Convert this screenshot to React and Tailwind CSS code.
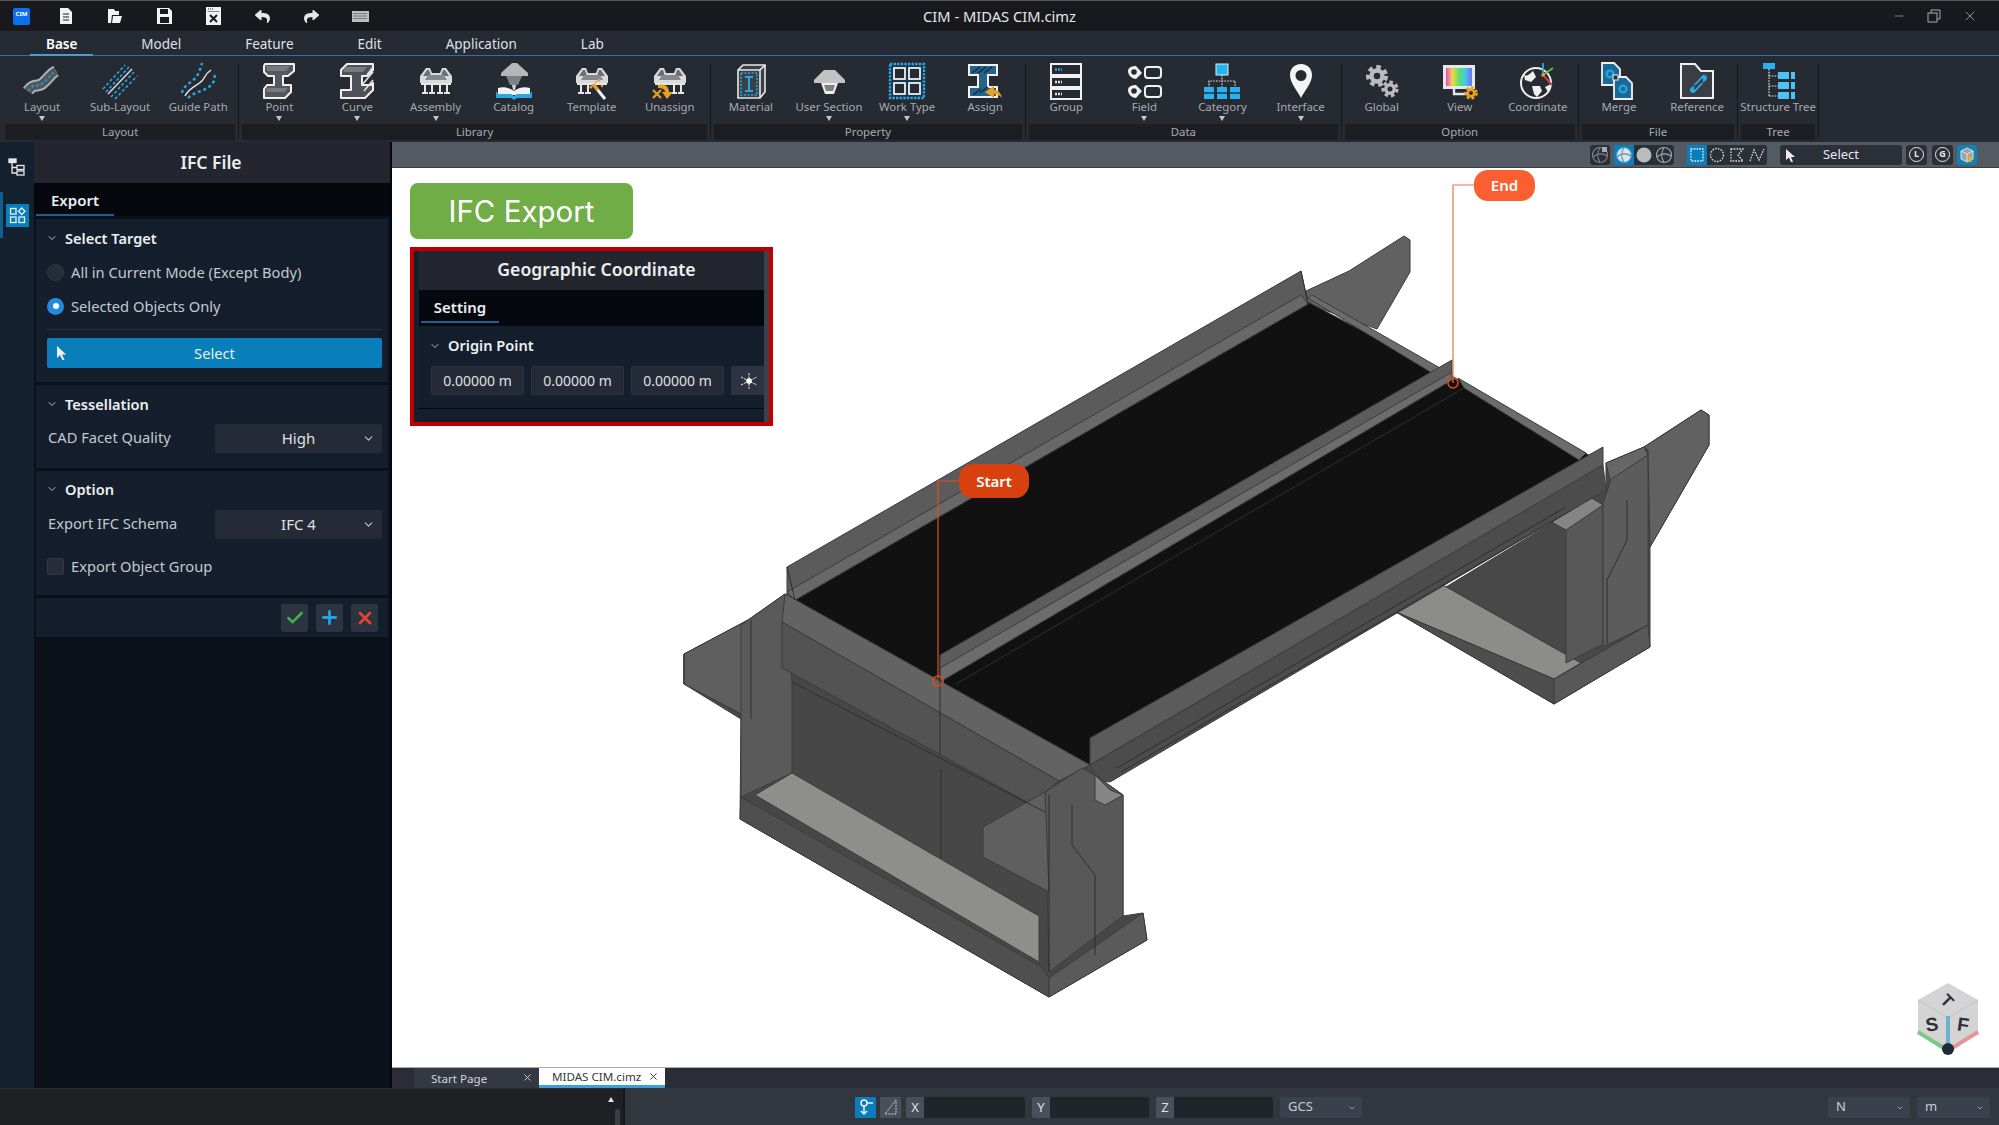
// CIM - MIDAS window, IFC Export screen
import React from 'react';
import { ChevronDown, Minus, X, Check, Plus } from 'lucide-react';
import { FaReply, FaShare } from 'react-icons/fa';

const BLUE = '#2aa7e0';

const Svg = ({ children, size = 40, box = 40 }) => (
  <svg width={size} height={size} viewBox={`0 0 ${box} ${box}`} fill="none">{children}</svg>
);

const Gear = ({ x, y, r, fill = '#b9bbbd', hole = '#262a33' }) => (
  <g>
    <circle cx={x} cy={y} r={r} fill="none" stroke={fill} strokeWidth={r * 0.45} strokeDasharray={`${r * 0.5} ${r * 0.42}`} />
    <circle cx={x} cy={y} r={r * 0.85} fill={fill} />
    <circle cx={x} cy={y} r={r * 0.36} fill={hole} />
  </g>
);

const Tray = () => (
  <g>
    <path d="M4 15 L10 7 H14 L16 12 H24 L26 7 H30 L36 15 V22 H4 Z" fill="#d9dadb" />
    <path d="M7 15 L11 9 H13 L15 15 Z M33 15 L29 9 H27 L25 15 Z" fill="#6b6e73" />
    <path d="M12 14 H28 L31 19 H9 Z" fill="#85888d" />
  </g>
);

const Piers = ({ xs = [9, 16, 24, 31] }) => (
  <g stroke="#e6e6e6" strokeWidth="2">
    {xs.map((x) => <path key={x} d={`M${x} 22 V32 M${x - 3} 32 H${x + 3}`} />)}
    <path d="M5 23 H35" />
  </g>
);

const icons = {
  layout: (
    <Svg>
      <path d="M6 30 C12 21 16 27 21 22 C27 17 28 13 34 10" stroke="#b0b1b2" strokeWidth="12" />
      <path d="M6 30 C12 21 16 27 21 22 C27 17 28 13 34 10" stroke="#50565e" strokeWidth="8" />
      <path d="M6 30 C12 21 16 27 21 22 C27 17 28 13 34 10" stroke="#2f8fbd" strokeWidth="2" strokeDasharray="3 2" />
    </Svg>
  ),
  subLayout: (
    <Svg>
      <path d="M8 33 L32 8" stroke="#d5d5d5" strokeWidth="1.5" />
      <g stroke={BLUE} strokeWidth="1.6" strokeDasharray="3 2.2">
        <path d="M3 28 L25 4" /><path d="M6 31 L29 6" /><path d="M11 36 L34 11" /><path d="M15 38 L37 15" />
      </g>
    </Svg>
  ),
  guidePath: (
    <Svg>
      <path d="M7 35 C13 24 22 25 26 17 C28 13 30 11 33 9" stroke="#e4e4e4" strokeWidth="1.5" />
      <path d="M4 32 C5 24 14 22 19 15 C21 11 23 7 24 2" stroke={BLUE} strokeWidth="2.4" strokeDasharray="3 2.8" />
      <path d="M10 37 C18 29 30 31 36 20 C37 17 37 15 36 13" stroke={BLUE} strokeWidth="2.4" strokeDasharray="3 2.8" />
    </Svg>
  ),
  point: (
    <Svg>
      <path d="M6 3 H35 V10 L29 15 H24 V24 H32 V31 L26 37 H5 V28 L8 24 H15 V15 H9 L5 11 V5 Z" fill="#55585e" stroke="#f1f1f1" strokeWidth="2" strokeLinejoin="round" />
      <path d="M7 5 H31 L27 10 H8 Z M8 27 H29 L25 31 H7 Z" fill="#777a7f" />
    </Svg>
  ),
  curve: (
    <Svg>
      <path d="M4 9 L10 3 H36 V9 L30 15 H25 V24 H34 L36 22 V29 L28 37 H4 V29 H14 V15 H4 Z" fill="#4e5157" stroke="#f1f1f1" strokeWidth="2" strokeLinejoin="round" />
      <path d="M25 24 L36 11 M27 30 L36 19 M30 14 L36 6" stroke="#e4e4e4" strokeWidth="1.6" />
      <path d="M8 6 H30 L26 11 H6 Z" fill="#777a7f" />
    </Svg>
  ),
  assembly: <Svg><Tray /><Piers /></Svg>,
  catalog: (
    <Svg>
      <path d="M18 2 H23 L34 12 V15 H7 V12 Z" fill="#b5b6b8" />
      <path d="M12 15 H28 L24 24 H16 Z" fill="#7d8085" />
      <path d="M18 24 H22 L21 29 H19 Z" fill="#d4d5d6" />
      <path d="M4 27 C10 25 16 27 20 30 C24 27 30 25 36 27 V34 H4 Z" fill="#eef2f5" />
      <path d="M2 30 V37 H17 L20 39 L23 37 H38 V30 L36 33 H23 L20 35 L17 33 H4 Z" fill={BLUE} />
    </Svg>
  ),
  template: (
    <Svg>
      <Tray /><Piers xs={[9, 16]} />
      <path d="M21 23 L33 38" stroke="#eee" strokeWidth="3" />
      <path d="M21 23 L26 29" stroke="#e8a021" strokeWidth="3" />
      <g fill="#e8a021"><circle cx="27" cy="19" r="1.6" /><circle cx="19" cy="26" r="1.6" /><circle cx="30" cy="25" r="1.2" /><circle cx="24" cy="21" r="1" /></g>
    </Svg>
  ),
  unassign: (
    <Svg>
      <Tray /><Piers xs={[24, 31]} />
      <path d="M3 29 L11 37 M11 29 L3 37" stroke="#e8a021" strokeWidth="2.2" />
      <path d="M8 24 C14 22 19 25 19 31 H23 L17 38 L12 31 H15 C15 28 12 27 8 27 Z" fill="#e8a021" />
    </Svg>
  ),
  material: (
    <Svg>
      <path d="M7 9 L12 4 H34 V31 L29 37 H7 Z" fill="#3b3f46" stroke="#e8e8e8" strokeWidth="1.6" />
      <path d="M7 9 H29 V37 M29 9 L34 4" stroke="#e8e8e8" strokeWidth="1.6" />
      <rect x="10" y="12" width="16" height="22" stroke={BLUE} strokeWidth="1.6" strokeDasharray="2 1.5" />
      <path d="M14 16 H22 M18 16 V30 M14 30 H22" stroke={BLUE} strokeWidth="2" />
    </Svg>
  ),
  userSection: (
    <Svg>
      <path d="M15 9 H26 L36 19 V22 H5 V19 Z" fill="#c2c3c5" />
      <path d="M12 22 H29 L25 33 H16 Z" fill="#eeeeee" />
      <path d="M15 24 H26 L24 30 H17 Z" fill="#7e8186" />
    </Svg>
  ),
  workType: (
    <Svg>
      <rect x="3" y="3" width="34" height="34" fill="#12384f" stroke={BLUE} strokeWidth="2.4" strokeDasharray="2.4 1.2" />
      <g stroke="#f0f0f0" strokeWidth="1.8" fill="#262a33">
        <rect x="7" y="7" width="11" height="11" /><rect x="22" y="7" width="11" height="11" />
        <rect x="7" y="22" width="11" height="11" /><rect x="22" y="22" width="11" height="11" />
      </g>
    </Svg>
  ),
  assign: (
    <Svg>
      <path d="M4 4 H32 V14 H23 V26 H32 V36 H4 V26 H13 V14 H4 Z" fill="#26628a" stroke="#f1f1f1" strokeWidth="2" />
      <path d="M7 12 L15 6 M13 12 L21 6 M19 12 L27 6 M15 32 L23 26 M8 34 L16 28" stroke="#0f2c3f" strokeWidth="1.4" />
      <path d="M20 31 L29 25 V29 C34 29 36 33 37 37 C34 34 32 33 29 33 V37 Z" fill="#e8a021" />
    </Svg>
  ),
  group: (
    <Svg>
      <g stroke="#f1f1f1" strokeWidth="2">
        <rect x="5" y="3" width="30" height="11" /><rect x="5" y="16" width="30" height="10" /><rect x="5" y="28" width="30" height="10" />
      </g>
      <path d="M9 8.5 H16" stroke={BLUE} strokeWidth="2.4" strokeDasharray="2 1" />
      <path d="M9 21 H16 M9 33 H16" stroke="#e4e4e4" strokeWidth="2.4" strokeDasharray="2 1" />
    </Svg>
  ),
  field: (
    <Svg>
      <path d="M4 10 C4 6 9 5 12 5 L18 12 L12 18 C9 18 4 15 4 10 Z M4 29 C4 25 9 24 12 24 L18 30 L12 37 C9 37 4 34 4 29 Z" fill="#f1f1f1" />
      <circle cx="10" cy="11" r="2.8" fill="#262a33" /><circle cx="10" cy="30" r="2.8" fill="#262a33" />
      <rect x="21" y="6" width="16" height="11" rx="3" stroke="#f1f1f1" strokeWidth="2" />
      <rect x="21" y="25" width="16" height="11" rx="3" stroke="#f1f1f1" strokeWidth="2" />
    </Svg>
  ),
  category: (
    <Svg>
      <rect x="14" y="3" width="12" height="11" fill="#29b2f0" stroke="#d8eef9" />
      <path d="M20 14 V27 M7 27 V20 H33 V27" stroke="#e4e4e4" strokeWidth="1.2" strokeDasharray="1.6 1.2" />
      {[2, 15, 28].map((x) => (
        <g key={x}><rect x={x} y="26" width="10" height="12" fill="#29b2f0" /><rect x={x} y="31" width="10" height="2" fill="#15547a" /></g>
      ))}
    </Svg>
  ),
  interfaceIcon: (
    <Svg>
      <path fillRule="evenodd" d="M20 3 C27 3 31 8 31 14 C31 22 24 29 20 37 C16 29 9 22 9 14 C9 8 13 3 20 3 Z M20 9 A5.5 5.5 0 1 0 20 20 A5.5 5.5 0 1 0 20 9 Z" fill="#f4f4f4" />
    </Svg>
  ),
  globalIcon: (
    <Svg><Gear x={15} y={15} r={9} /><Gear x={28} y={28} r={7} /></Svg>
  ),
  view: (
    <Svg>
      <rect x="3" y="4" width="32" height="24" fill="#e8e8e8" />
      <defs>
        <linearGradient id="rainbow" x1="0" x2="1" y1="0" y2="0">
          <stop offset="0" stopColor="#e44fc0" /><stop offset="0.25" stopColor="#f3d44a" /><stop offset="0.5" stopColor="#5fe06a" /><stop offset="0.75" stopColor="#3fc8e8" /><stop offset="1" stopColor="#7a6cf0" />
        </linearGradient>
      </defs>
      <rect x="6" y="7" width="26" height="18" fill="url(#rainbow)" />
      <path d="M14 28 V33 H28" stroke="#e8e8e8" strokeWidth="2.4" />
      <Gear x={31} y={32} r={5.5} fill="#eda21d" />
    </Svg>
  ),
  coordinate: (
    <Svg>
      <circle cx="18" cy="22" r="15" stroke="#f0f0f0" strokeWidth="2" />
      <path d="M6 14 C10 16 12 12 15 10 L18 16 L13 21 L7 19 Z M14 25 H22 L24 30 L19 36 L16 33 Z M27 26 L33 23 L30 31 Z" fill="#f0f0f0" />
      <path d="M25 14 V2" stroke={BLUE} strokeWidth="1.8" />
      <path d="M25 14 L35 7" stroke="#5cc24a" strokeWidth="1.8" />
      <path d="M25 14 L34 24" stroke="#d23b3b" strokeWidth="2" />
      <circle cx="25" cy="14" r="1.8" fill="#e8a021" />
    </Svg>
  ),
  merge: (
    <Svg>
      <path d="M3 2 H15 L21 8 V24 H3 Z" fill="#1b6a96" stroke="#f1f1f1" strokeWidth="1.8" />
      <path d="M15 16 H27 L33 22 V38 H15 Z" fill="#1b6a96" stroke="#f1f1f1" strokeWidth="1.8" />
      <circle cx="11" cy="13" r="3.4" stroke="#23a3e0" strokeWidth="2.4" />
      <circle cx="24" cy="28" r="3.4" stroke="#23a3e0" strokeWidth="2.4" />
      <rect x="14" y="14" width="5" height="5" fill="#262a33" stroke="#f1f1f1" />
    </Svg>
  ),
  reference: (
    <Svg>
      <path d="M4 3 H18 L24 10 H36 V37 H4 Z" fill="#3a3d43" stroke="#f1f1f1" strokeWidth="2" />
      <path d="M16 29 L27 17" stroke={BLUE} strokeWidth="6" strokeLinecap="round" />
      <path d="M18 27 L25 19" stroke="#3a3d43" strokeWidth="2.4" strokeLinecap="round" />
      <path d="M14 25 L21 24 M22 22 L28 21" stroke="#3a3d43" strokeWidth="1.2" />
    </Svg>
  ),
  tree: (
    <Svg>
      <rect x="5" y="2" width="12" height="6" fill="#29b2f0" />
      <path d="M11 8 V35 M11 15 H20 M11 25 H20 M11 35 H20" stroke="#e4e4e4" strokeWidth="1.2" strokeDasharray="1.6 1.2" />
      {[11, 21, 31].map((y) => (
        <g key={y} fill="#4dc2f5"><rect x="20" y={y} width="11" height="7" /><rect x="33" y={y} width="4" height="7" /></g>
      ))}
    </Svg>
  ),
};

const ribbon = [
  { name: 'Layout', items: [['Layout', 'layout', 1], ['Sub-Layout', 'subLayout'], ['Guide Path', 'guidePath']] },
  { name: 'Library', items: [['Point', 'point', 1], ['Curve', 'curve', 1], ['Assembly', 'assembly', 1], ['Catalog', 'catalog'], ['Template', 'template'], ['Unassign', 'unassign']] },
  { name: 'Property', items: [['Material', 'material'], ['User Section', 'userSection', 1], ['Work Type', 'workType', 1], ['Assign', 'assign']] },
  { name: 'Data', items: [['Group', 'group'], ['Field', 'field', 1], ['Category', 'category', 1], ['Interface', 'interfaceIcon', 1]] },
  { name: 'Option', items: [['Global', 'globalIcon'], ['View', 'view'], ['Coordinate', 'coordinate']] },
  { name: 'File', items: [['Merge', 'merge'], ['Reference', 'reference']] },
  { name: 'Tree', items: [['Structure Tree', 'tree']] },
];

const RibbonItem = ({ label, icon, arrow }) => (
  <div className="w-[78.1px] h-[68px] pt-[5px] flex flex-col items-center">
    {icons[icon]}
    <span className="text-[11.4px] leading-[14px] -mt-[1px] text-[#a6aab1] whitespace-nowrap">{label}</span>
    {arrow && <span className="mt-[2px] w-0 h-0 border-x-[3px] border-x-transparent border-t-[5px] border-t-[#c4c6ca]" />}
  </div>
);

const RibbonGroup = ({ name, items }) => (
  <div className="flex flex-col">
    <div className="flex">
      {items.map(([label, icon, arrow]) => <RibbonItem key={label} label={label} icon={icon} arrow={arrow} />)}
    </div>
    <div className="h-[16px] mx-[2px] bg-[#1c1e24] text-[11.4px] leading-[16px] text-center text-[#a6aab1]">{name}</div>
  </div>
);

const TitleIcon = ({ children }) => (
  <span className="w-[49px] flex justify-center">
    <svg width="19" height="18" viewBox="0 0 19 18" fill="none">{children}</svg>
  </span>
);

const TitleIcons = () => (
  <div className="flex items-center h-full">
    <div className="ml-[13px] mr-[12px] w-[17px] h-[17px] rounded-[2px] bg-[#0b6ff0] text-white text-[6px] font-bold leading-[12px] text-center">CIM</div>
    <TitleIcon><path d="M3 1 H11 L15 5 V17 H3 Z" fill="#f2f2f2" /><path d="M6 7 H12 M6 10 H12 M6 13 H12" stroke="#18191c" strokeWidth="1.2" /></TitleIcon>
    <TitleIcon><path d="M2 2 H8 L9 4 H13 V8 H6 L5 16 H2 Z M7 9 H16 L14 16 H6 Z" fill="#f2f2f2" /></TitleIcon>
    <TitleIcon><path fillRule="evenodd" d="M2 1 H14 L17 4 V17 H2 Z M5 2 V7 H13 V2 Z M5 10 V16 H14 V10 Z" fill="#f2f2f2" /></TitleIcon>
    <TitleIcon><path fillRule="evenodd" d="M2 0 H17 V18 H2 Z M3.5 4.5 V16.5 H15.5 V4.5 Z" fill="#f2f2f2" /><rect x="3" y="5" width="13" height="12" fill="#f2f2f2" /><path d="M6 8 L13 15 M13 8 L6 15" stroke="#18191c" strokeWidth="2" /><path d="M4 2 H9" stroke="#18191c" strokeWidth="1.2" strokeDasharray="1 1" /></TitleIcon>
    <span className="w-[49px] flex justify-center text-[#e6e6e6]"><FaReply size={15} /></span>
    <span className="w-[49px] flex justify-center text-[#e6e6e6]"><FaShare size={15} /></span>
    <TitleIcon><rect x="1" y="4" width="17" height="11" fill="#bdbdbd" /><path d="M2.5 6.5 H16.5 M2.5 9 H16.5 M2.5 11.5 H16.5" stroke="#33363b" strokeWidth="1" strokeDasharray="1 1" /></TitleIcon>
  </div>
);

const ToolGroup = ({ children, className = '' }) => (
  <div className={`h-[20px] flex items-center rounded-[3px] bg-[#2a2f38] ${className}`}>{children}</div>
);

const Small = ({ children, active, w = 20 }) => (
  <span className={`h-[20px] flex items-center justify-center ${active ? 'bg-[#0a7ebb]' : ''}`} style={{ width: w }}>
    <svg width="18" height="18" viewBox="0 0 18 18" fill="none">{children}</svg>
  </span>
);

const Globe = ({ color = '#d4d6d8', fill = 'none' }) => (
  <g stroke={color} strokeWidth="1.2">
    <circle cx="9" cy="9" r="7.5" fill={fill} />
    <path d="M2 11 C6 7 12 7 16 10 M9 1.5 C6 6 6 12 9 16.5" />
  </g>
);

const Viewbar = () => (
  <div className="h-[26px] shrink-0 bg-[#535a63] border-b border-[#3a3e45] flex items-center justify-end pr-[22px]">
    <ToolGroup><Small><Globe color="#7d8288" /><rect x="11" y="1" width="5" height="5" fill="#a8acb1" /></Small></ToolGroup>
    <ToolGroup className="ml-[4px]">
      <Small active><Globe color="#4a94bd" fill="#dfe2e5" /></Small>
      <Small><circle cx="9" cy="9" r="7.5" fill="#b9bcbf" /></Small>
      <Small><Globe color="#a4a8ac" /></Small>
    </ToolGroup>
    <ToolGroup className="ml-[13px]">
      <Small active><rect x="3" y="3" width="12" height="12" stroke="#f2f2f2" strokeWidth="1.3" strokeDasharray="1.6 1.2" /></Small>
      <Small><circle cx="9" cy="9" r="6.5" stroke="#e2e2e2" strokeWidth="1.3" strokeDasharray="1.6 1.2" /></Small>
      <Small><path d="M3 3 H15 L10 9 L15 15 H3 Z" stroke="#e2e2e2" strokeWidth="1.3" strokeDasharray="1.6 1.2" /></Small>
      <Small><path d="M2 15 L6 4 L11 14 L16 3" stroke="#e2e2e2" strokeWidth="1.3" strokeDasharray="1.6 1.2" /></Small>
    </ToolGroup>
    <ToolGroup className="ml-[13px] w-[122px] relative justify-center text-[13px] text-[#e8e8e8]">
      <svg className="absolute left-[5px] top-[3px]" width="12" height="15" viewBox="0 0 12 15"><path d="M1 1 L10 9 H6 L8 14 H6 L4 9.5 L1 12 Z" fill="#f0f0f0" /></svg>
      Select
    </ToolGroup>
    <ToolGroup className="ml-[4px] w-[21px] justify-center">
      <span className="w-[15px] h-[15px] rounded-full border-[1.5px] border-[#e8e8e8] text-[9px] leading-[12px] text-center text-[#e8e8e8] font-bold">L</span>
    </ToolGroup>
    <ToolGroup className="ml-[5px] w-[21px] justify-center">
      <span className="w-[15px] h-[15px] rounded-full border-[1.5px] border-[#e8e8e8] text-[9px] leading-[12px] text-center text-[#e8e8e8] font-bold">G</span>
    </ToolGroup>
    <ToolGroup className="ml-[4px] w-[20px] justify-center !bg-[#1380b8]">
      <svg width="18" height="18" viewBox="0 0 18 18" fill="none">
        <path d="M9 2 L15 5 V13 L9 16 L3 13 V5 Z" fill="#9aa4aa" stroke="#e0e0e0" />
        <path d="M3 5 L9 8 L15 5 M9 8 V16" stroke="#e0e0e0" />
        <path d="M10 9 L16 13 H13 L14 16 L12 16 L11 14 Z" fill="#e8b021" />
      </svg>
    </ToolGroup>
  </div>
);

const Section = ({ title, children, className = '' }) => (
  <div className={`mt-[3px] bg-[#141e2c] ${className}`}>
    <div className="flex items-center h-[20px]">
      <ChevronDown className="ml-[10px] w-[12px] h-[12px] text-[#b5b9bf]" strokeWidth={2} />
      <span className="ml-[7px] text-[14.6px] font-semibold text-[#eceef0] leading-[20px]">{title}</span>
    </div>
    {children}
  </div>
);

const Radio = ({ on, label }) => (
  <div className="flex items-center h-[20px] pl-[11px]">
    <span className={`w-[17px] h-[17px] rounded-full flex items-center justify-center ${on ? 'bg-[#2488dc]' : 'bg-[#262c38] border border-[#333a46]'}`}>
      {on && <span className="w-[6px] h-[6px] rounded-full bg-white" />}
    </span>
    <span className="ml-[7px] text-[14.7px] text-[#c4c8ce] leading-[20px]">{label}</span>
  </div>
);

const Dropdown = ({ label, value, className = '' }) => (
  <div className={`flex items-center h-[29px] pl-[12px] pr-[6px] ${className}`}>
    <span className="text-[14.7px] text-[#c4c8ce] flex-1 whitespace-nowrap -mt-[2px]">{label}</span>
    <div className="w-[167px] h-[29px] rounded-[2px] bg-[#242a36] flex items-center relative justify-center text-[15px] text-[#dfe1e4]">
      {value}
      <ChevronDown className="absolute right-[7px] top-[8px] w-[13px] h-[13px] text-[#c4c8ce]" />
    </div>
  </div>
);

const FooterBtn = ({ children }) => (
  <span className="w-[27px] h-[28px] rounded-[2px] bg-[#2d3340] flex items-center justify-center">{children}</span>
);

const Panel = () => (
  <div className="w-[392px] shrink-0 flex bg-[#0a111a] border-r-2 border-[#05070a]">
    <div className="w-[34px] shrink-0 bg-[#13202e] flex flex-col">
      <div className="h-[50px] flex items-center justify-center">
        <svg width="18" height="18" viewBox="0 0 18 18" fill="none" stroke="#e8e8e8" strokeWidth="1.3">
          <rect x="1" y="1" width="7" height="3.5" fill="#e8e8e8" />
          <path d="M4 5 V15 H9 M4 9.5 H9" /><rect x="9" y="7.5" width="7" height="4" /><rect x="9" y="13" width="7" height="4" />
        </svg>
      </div>
      <div className="h-[46px] flex items-center border-l-[3px] border-[#125f8e] pl-[3px]">
        <div className="w-[23px] h-[23px] bg-[#0a7ebb] flex items-center justify-center">
          <svg width="17" height="17" viewBox="0 0 17 17" fill="none" stroke="#e8eef2" strokeWidth="1.3">
            <rect x="1.5" y="1.5" width="5.5" height="5.5" /><rect x="1.5" y="10" width="5.5" height="5.5" /><rect x="10" y="10" width="5.5" height="5.5" />
            <path d="M12.7 1 L16 4.2 L12.7 7.5 L9.5 4.2 Z" />
          </svg>
        </div>
      </div>
    </div>
    <div className="flex-1 flex flex-col px-[2px]">
      <div className="h-[41px] -mx-[2px] pr-[2px] bg-[#23262f] flex items-center justify-center text-[17.5px] font-semibold text-[#eceef0]">IFC File</div>
      <div className="h-[33px] -mx-[2px] bg-[#05090f] flex">
        <span className="ml-[2px] w-[78px] border-b-2 border-[#1f5f96] text-[15px] font-semibold text-[#eceef0] text-center leading-[34px]">Export</span>
      </div>
      <Section title="Select Target" className="h-[163px] pt-[9px]">
        <div className="pt-[14px] flex flex-col gap-[14px]">
          <Radio label="All in Current Mode (Except Body)" />
          <Radio on label="Selected Objects Only" />
        </div>
        <div className="ml-[11px] mr-[6px] mt-[13px] h-px bg-[#2b323e]" />
        <div className="ml-[11px] mr-[6px] mt-[8px] h-[30px] rounded-[2px] bg-[#0a7ebb] relative flex items-center justify-center text-[14.7px] text-[#e8eef3]">
          <svg className="absolute left-[9px] top-[7px]" width="12" height="16" viewBox="0 0 12 16"><path d="M1 1 L10 9.5 H6 L8.5 15 H6.5 L4 10 L1 13 Z" fill="#f2f2f2" /></svg>
          Select
        </div>
      </Section>
      <Section title="Tessellation" className="h-[83px] pt-[9px]">
        <Dropdown label="CAD Facet Quality" value="High" className="mt-[10px]" />
      </Section>
      <Section title="Option" className="h-[124px] pt-[8px]">
        <Dropdown label="Export IFC Schema" value="IFC 4" className="mt-[11px]" />
        <div className="flex items-center h-[20px] pl-[11px] mt-[17px]">
          <span className="w-[17px] h-[17px] rounded-[2px] bg-[#262c38] border border-[#333a46]" />
          <span className="ml-[7px] text-[14.7px] text-[#c4c8ce]">Export Object Group</span>
        </div>
      </Section>
      <div className="mt-[3px] h-[39px] bg-[#141e2c] flex items-center justify-end gap-[8px] pr-[10px]">
        <FooterBtn><Check className="w-[20px] h-[20px] text-[#3fb24a]" strokeWidth={3} /></FooterBtn>
        <FooterBtn><Plus className="w-[21px] h-[21px] text-[#22a3e8]" strokeWidth={3.2} /></FooterBtn>
        <FooterBtn><X className="w-[20px] h-[20px] text-[#e2452f]" strokeWidth={3.2} /></FooterBtn>
      </div>
    </div>
  </div>
);

const GeoField = ({ w = 93 }) => (
  <div className="h-[29px] rounded-[2px] bg-[#242a36] border border-[#2d3340] flex items-center justify-center text-[14px] text-[#dfe1e4]" style={{ width: w }}>0.00000 m</div>
);

const GeoPanel = () => (
  <div className="w-[363px] h-[179px] mt-[8px] border-[4px] border-[#c00000] bg-[#0a111a] flex overflow-hidden">
    <div className="w-[5px] bg-[#13202e]" />
    <div className="flex-1 flex flex-col relative">
      <div className="h-[39px] pb-[2px] pl-[5px] bg-[#23262f] flex items-center justify-center text-[17.6px] font-semibold text-[#eceef0]">Geographic Coordinate</div>
      <div className="h-[36px] bg-[#05090f]">
        <div className="ml-[2px] w-[78px] h-[33px] border-b-2 border-[#1f5f96] text-[15px] font-semibold text-[#eceef0] text-center leading-[34px]">Setting</div>
      </div>
      <div className="h-[82px] bg-[#141e2c]">
        <div className="flex items-center h-[20px] mt-[10px]">
          <ChevronDown className="ml-[10px] w-[12px] h-[12px] text-[#b5b9bf]" />
          <span className="ml-[7px] text-[14.6px] font-semibold text-[#eceef0]">Origin Point</span>
        </div>
        <div className="flex gap-[7px] pl-[12px] mt-[10px]">
          <GeoField /><GeoField /><GeoField />
          <div className="w-[36px] h-[29px] rounded-[2px] bg-[#2d3340] flex items-center justify-center">
            <svg width="18" height="18" viewBox="0 0 18 18" stroke="#e8e8e8" strokeWidth="1"><path d="M9 1 V17 M1 5 L17 13 M1 13 L17 5" strokeDasharray="2.5 1" /><circle cx="9" cy="9" r="2.5" fill="#fff" /></svg>
          </div>
        </div>
      </div>
      <div className="h-[1px] bg-[#05090f]" />
      <div className="flex-1 bg-[#141e2c]" />
      <div className="absolute right-0 top-0 bottom-0 w-[5px] bg-[#3c4149]" />
    </div>
  </div>
);

// bridge polygons in screen px, painted back to front
const bridgeFaces = [
  // far abutment
  ['1441,590 1606,490 1606,463 1644,447 1701,410 1709,415 1709,445 1650,547 1650,647 1554,704 1396,612', '#484848'],
  ['1396,612 1441,584 1581,663 1554,679', '#8c8c8a'],
  ['1396,612 1554,679 1554,704', '#4e4e4e'],
  ['1554,679 1648,625 1650,647 1554,704', '#585858'],
  ['1566,528 1603,504 1603,644 1566,663', '#585858'],
  ['1603,504 1613,472 1648,450 1648,625 1603,647', '#5c5c5c'],
  ['1644,447 1701,410 1709,415 1709,445 1650,547 1648,450', '#616161'],
  ['1606,463 1644,447 1648,455 1610,480', '#666666'],
  ['1548,520 1590,497 1603,505 1566,530', '#858585'],
  // deck
  ['1306,291 1349,271 1404,236 1410,240 1410,272 1377,329 1308,304', '#616161'],
  ['795,600 1308,302 1440,372 940,662 940,684 930,680', '#111111'],
  ['935,680 1452,376 1592,457 1094,767', '#111111'],
  ['787,567 1301,271 1308,304 795,600 787,597', '#5b5b5b'],
  ['787,592 1301,295 1308,304 795,600', '#686868'],
  ['1308,298 1312,295 1440,368 1432,373', '#6c6c6c'],
  ['1458,378 1586,453 1579,460 1464,388', '#6c6c6c'],
  ['940,655 1452,360 1452,380 940,682', '#5c5c5c'],
  ['940,668 1452,372 1452,380 940,682', '#6c6c6c'],
  ['1090,738 1603,447 1603,465 1090,765', '#5b5b5b'],
  ['1090,765 1603,465 1606,490 1110,782 1095,780', '#4c4c4c'],
  // near abutment
  ['684,654 748,620 785,594 1090,765 1095,775 1123,795 1123,916 1143,913 1147,940 1049,997 740,819 741,719 684,684', '#474747'],
  ['684,654 748,620 751,719 684,684', '#5f5f5f'],
  ['741,625 785,594 792,682 792,773 741,797', '#5a5a5a'],
  ['792,773 1039,916 1039,962 755,795', '#8e8e8c'],
  ['741,797 1042,967 1049,978 1049,997 740,819', '#4f4f4f'],
  ['1049,978 1143,913 1147,940 1049,997', '#5a5a5a'],
  ['785,594 1090,765 1059,781 782,622', '#636363'],
  ['782,622 1059,781 1045,792 1045,812 782,668', '#535353'],
  ['1045,792 1082,768 1095,775 1123,795 1123,916 1049,972', '#585858'],
  ['983,827 1045,792 1049,892 983,857', '#5f5f5f'],
  ['1095,775 1110,790 1123,795 1105,805 1095,800', '#868686'],
];

const bridgeLines = [
  'M1117 768 L1566 507', 'M1121 772 L1572 510', 'M956 684 L1464 388',
  'M941 769 V858', 'M940 668 V755', 'M1049 795 V972', 'M1072 805 L1072 845 L1095 875 V955',
  'M1627 500 L1627 540 L1607 580 V644', 'M787 567 L795 600', 'M751 620 V719',
  'M1301 271 L1308 304', 'M684 654 V684', 'M792 682 L1045 812',
];

const Bridge = () => (
  <svg className="absolute inset-0 w-full h-full" viewBox="392 168 1607 899">
    {bridgeFaces.map(([points, fill]) => (
      <polygon key={points} points={points} fill={fill} stroke="#3c3c3c" strokeWidth="1" />
    ))}
    {bridgeLines.map((d) => <path key={d} d={d} stroke="#2f2f2f" strokeWidth="1" fill="none" />)}
    <path d="M959 481 H938 V679" stroke="#d9531f" strokeWidth="1.2" fill="none" />
    <path d="M1474 185 H1453 V383" stroke="#e8754f" strokeWidth="1.2" fill="none" />
    <circle cx="938" cy="681" r="5" stroke="#e04a1a" strokeWidth="1.6" fill="none" />
    <circle cx="1453" cy="383" r="5" stroke="#e04a1a" strokeWidth="1.6" fill="none" />
  </svg>
);

const ViewCube = () => (
  <svg className="absolute right-[20px] bottom-[11px]" width="62" height="74" viewBox="0 0 62 74" fill="none">
    <path d="M31 1 L61 18 V50 L31 68 L1 50 V18 Z" fill="#d4d4d4" />
    <path d="M1 18 L31 36 L61 18" stroke="#c2c2c2" />
    <path d="M31 34 V64" stroke="#69b2d2" strokeWidth="4" />
    <path d="M1 50 L30 68" stroke="#7fc87f" strokeWidth="4" />
    <path d="M61 50 L32 68" stroke="#e49696" strokeWidth="4" />
    <circle cx="31" cy="67" r="6" fill="#1f2b3d" />
    <text x="31" y="25" fontSize="17" fontWeight="700" fill="#2b303a" textAnchor="middle" transform="rotate(45 31 18)" fontFamily="'Liberation Sans',sans-serif">T</text>
    <text x="15" y="49" fontSize="19" fontWeight="700" fill="#2b303a" textAnchor="middle" transform="rotate(-8 15 43)" fontFamily="'Liberation Sans',sans-serif">S</text>
    <text x="46" y="49" fontSize="19" fontWeight="700" fill="#2b303a" textAnchor="middle" transform="rotate(8 46 43)" fontFamily="'Liberation Sans',sans-serif">F</text>
  </svg>
);

const Viewport = () => (
  <div className="flex-1 bg-white relative overflow-hidden pl-[18px] pt-[15px]">
    <Bridge />
    <ViewCube />
    <div className="relative w-[223px] h-[56px] rounded-[8px] bg-[#70ad47] flex items-center justify-center text-[29.5px] text-white font-['Inter',sans-serif]">IFC Export</div>
    <div className="relative"><GeoPanel /></div>
    <span className="absolute left-[567px] top-[296px] w-[70px] h-[34px] rounded-[14px] bg-[#d9400f] text-white text-[15px] font-semibold flex items-center justify-center">Start</span>
    <span className="absolute left-[1082px] top-[2px] w-[61px] h-[31px] rounded-[14px] bg-[#f95f30] text-white text-[15px] font-semibold flex items-center justify-center">End</span>
  </div>
);

const DocTabs = () => (
  <div className="h-[21px] shrink-0 bg-[#2a2d35] border-t border-[#a8abb0] flex pl-[22px] text-[11.6px]">
    <div className="w-[125px] bg-[#333843] flex items-center text-[#d4d6da] pl-[17px] pt-[1px] relative">
      Start Page
      <X className="absolute right-[6px] top-[4px] w-[11px] h-[11px]" />
    </div>
    <div className="w-[126px] bg-white border-b-[3px] border-[#3aa0d8] flex items-center text-[#33363b] pl-[13px] pt-[1px] relative">
      MIDAS CIM.cimz
      <X className="absolute right-[6px] top-[3px] w-[11px] h-[11px]" />
    </div>
  </div>
);

const CoordInput = ({ label, w }) => (
  <div className="flex h-[21px] rounded-[2px] overflow-hidden" style={{ width: w }}>
    <span className="w-[18px] bg-[#4a505b] text-[13px] text-[#dfe1e4] text-center leading-[21px]">{label}</span>
    <span className="flex-1 bg-[#20242b]" />
  </div>
);

const SelectBox = ({ label, w }) => (
  <div className="h-[21px] rounded-[2px] bg-[#3b414c] flex items-center relative pl-[8px] text-[13px] text-[#c9ccd1]" style={{ width: w }}>
    {label}
    <ChevronDown className="absolute right-[6px] top-[7px] w-[8px] h-[8px]" />
  </div>
);

const StatusBar = () => (
  <div className="h-[37px] shrink-0 flex">
    <div className="w-[625px] bg-[#1f2024] border-r-2 border-[#15161a] border-t border-t-[#2a2d33] relative">
      <span className="absolute left-[608px] top-[8px] w-0 h-0 border-x-[3px] border-x-transparent border-b-[5px] border-b-[#e0e0e0]" />
      <span className="absolute left-[615px] top-[20px] bottom-0 w-[5px] rounded-t-[2px] bg-[#3a3d43]" />
    </div>
    <div className="flex-1 bg-[#31363f] flex items-center pl-[230px] pr-[9px] pt-[1px]">
      <span className="w-[21px] h-[21px] bg-[#0a7ebb] flex items-center justify-center">
        <svg width="16" height="18" viewBox="0 0 16 18" fill="none" stroke="#f0f0f0" strokeWidth="1.5"><circle cx="6" cy="5" r="3" /><path d="M6 8 V16 M3 13 L6 16 L9 13 M9 5 H15" /></svg>
      </span>
      <span className="ml-[4px] w-[21px] h-[21px] bg-[#4a505b] flex items-center justify-center">
        <svg width="16" height="18" viewBox="0 0 16 18" fill="none" stroke="#c4c8ce" strokeWidth="1"><path d="M13 2 L2 16 H13 Z" strokeDasharray="2 1" /></svg>
      </span>
      <div className="ml-[5px] flex gap-[7px]">
        <CoordInput label="X" w={119} />
        <CoordInput label="Y" w={117} />
        <CoordInput label="Z" w={117} />
      </div>
      <div className="ml-[7px]"><SelectBox label="GCS" w={82} /></div>
      <div className="flex-1" />
      <SelectBox label="N" w={82} />
      <div className="ml-[7px]"><SelectBox label="m" w={73} /></div>
    </div>
  </div>
);

export default function App() {
  return (
    <div className="w-[1999px] h-[1125px] flex flex-col overflow-hidden bg-[#262a33] font-['Noto_Sans',sans-serif] border-t border-[#55585e]">
      {/* title bar */}
      <div className="h-[30px] shrink-0 bg-[#18191c] grid grid-cols-[1fr_auto_1fr] items-center">
        <TitleIcons />
        <span className="text-[14.7px] text-[#e4e6e8]">CIM - MIDAS CIM.cimz</span>
        <div className="flex justify-end items-center gap-[21px] pr-[21px] text-[#a8abb0]">
          <Minus className="w-[14px] h-[14px]" strokeWidth={1.2} />
          <svg width="14" height="14" viewBox="0 0 14 14" fill="none" stroke="currentColor"><rect x="1" y="4" width="9" height="9" /><path d="M4 4 V1 H13 V10 H10" /></svg>
          <X className="w-[16px] h-[16px]" strokeWidth={1.2} />
        </div>
      </div>

      {/* ribbon tabs */}
      <div className="h-[25px] shrink-0 flex pl-[14px] border-b border-[#2f6fb0] text-[13.5px] text-[#dfe1e4]">
        {['Base', 'Model', 'Feature', 'Edit', 'Application', 'Lab'].map((t) => (
          <span key={t} className={`mx-[16px] px-[16px] leading-[26px] ${t === 'Base' ? 'font-semibold text-white border-b-2 border-[#4a9ad8] h-[25px]' : ''}`}>{t}</span>
        ))}
      </div>

      {/* ribbon */}
      <div className="h-[86px] shrink-0 flex pl-[3px] bg-[#262a33]">
        {ribbon.map((g) => (
          <React.Fragment key={g.name}>
            <RibbonGroup name={g.name} items={g.items} />
            <div className="w-[3px] flex justify-center pt-[8px] pb-[4px]"><span className="w-[1px] bg-[#15171b]" /></div>
          </React.Fragment>
        ))}
      </div>

      <div className="flex-1 flex min-h-0">
        <Panel />
        <div className="flex-1 flex flex-col min-w-0">
          <Viewbar />
          <Viewport />
          <DocTabs />
        </div>
      </div>
      <StatusBar />
    </div>
  );
}
